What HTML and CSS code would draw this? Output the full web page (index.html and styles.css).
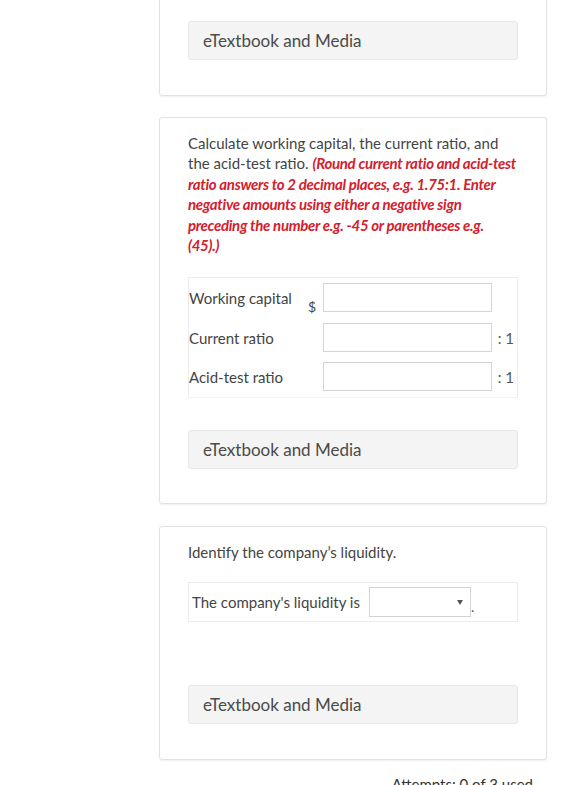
FILE: index.html
```html
<!DOCTYPE html>
<html>
<head>
<meta charset="utf-8">
<link rel="stylesheet" href="styles.css">
</head>
<body>
<div class="page">
  <div class="card card-first">
    <div class="media-btn">eTextbook and Media</div>
  </div>

  <div class="card card-calc">
    <p class="question">Calculate working capital, the current ratio, and the acid-test ratio. <em class="hint">(Round current ratio and acid-test ratio answers to 2 decimal places, e.g. 1.75:1. Enter negative amounts using either a negative sign preceding the number e.g. -45 or parentheses e.g.<br>(45).)</em></p>
    <div class="answer-grid">
      <div class="label">Working capital</div>
      <div class="prefix">$</div>
      <div class="field"><span class="input"></span></div>
      <div class="suffix"></div>

      <div class="label">Current ratio</div>
      <div class="prefix"></div>
      <div class="field"><span class="input"></span></div>
      <div class="suffix">: 1</div>

      <div class="label">Acid-test ratio</div>
      <div class="prefix"></div>
      <div class="field"><span class="input"></span></div>
      <div class="suffix">: 1</div>
    </div>
    <div class="media-btn media-btn-calc">eTextbook and Media</div>
  </div>

  <div class="card card-liq">
    <p class="question">Identify the company’s liquidity.</p>
    <div class="liq-box">
      <span class="liq-label">The company's liquidity is</span>
      <span class="select"><span class="arrow"></span></span><span class="dot">.</span>
    </div>
    <div class="media-btn media-btn-liq">eTextbook and Media</div>
  </div>

  <div class="attempts">Attempts: 0 of 3 used</div>
</div>
</body>
</html>
```

FILE: styles.css
```css
html, body {
  margin: 0;
  padding: 0;
  background: #ffffff;
}

body {
  font-family: Lato, "Open Sans", "Liberation Sans", sans-serif;
  color: #454545;
  overflow: hidden;
}

.page {
  width: 388px;
  margin-left: 159px;
}

.card {
  border: 1px solid #e2e2e2;
  border-radius: 3px;
  box-shadow: 0 1px 2px rgba(0, 0, 0, 0.06);
  padding: 0 28px;
  background: #fff;
}

.card-first {
  margin-top: -20px;
  padding-top: 40px;
  padding-bottom: 35px;
}

.card-calc {
  margin-top: 21px;
  padding-top: 15px;
  padding-bottom: 34px;
}

.card-liq {
  margin-top: 22px;
  padding-top: 15px;
  padding-bottom: 35px;
}

.media-btn {
  height: 37px;
  line-height: 37px;
  background: #f4f4f4;
  border: 1px solid #e7e7e7;
  border-radius: 3px;
  padding: 0 14px;
  font-size: 17px;
  color: #4a4a4a;
}

.question {
  margin: 0;
  font-size: 15px;
  line-height: 20.4px;
  color: #444;
}

.hint {
  color: #d3202c;
  font-weight: bold;
  font-style: italic;
  letter-spacing: -0.3px;
}

.answer-grid {
  margin-top: 22px;
  display: grid;
  grid-template-columns: 112px 22px 169px 1fr;
  grid-auto-rows: 39.4px;
  border: 1px solid #ececec;
  border-bottom-color: #f3f3f3;
}

.label {
  display: flex;
  align-items: center;
  font-size: 15px;
  color: #444;
  white-space: nowrap;
}

.prefix {
  display: flex;
  align-items: flex-end;
  justify-content: center;
  font-size: 14px;
  padding-bottom: 3px;
  color: #444;
}

.field {
  display: flex;
  align-items: flex-start;
  padding-top: 5px;
}

.input {
  display: block;
  width: 167px;
  height: 27px;
  border: 1px solid #d3d3d3;
  background: #fff;
}

.suffix {
  display: flex;
  align-items: center;
  justify-content: flex-end;
  font-size: 15px;
  color: #555;
  padding-right: 3px;
  white-space: nowrap;
}

.media-btn-calc {
  margin-top: 32px;
}

.liq-box {
  margin-top: 20px;
  height: 38px;
  border: 1px solid #ececec;
  display: flex;
  align-items: center;
  padding-left: 3px;
}

.liq-label {
  font-size: 15px;
  color: #444;
  margin-right: 9px;
}

.select {
  display: block;
  position: relative;
  width: 100px;
  height: 28px;
  border: 1px solid #d3d3d3;
  background: #fff;
}

.arrow {
  position: absolute;
  right: 7px;
  top: 12px;
  width: 0;
  height: 0;
  border-left: 3px solid transparent;
  border-right: 3px solid transparent;
  border-top: 5px solid #555;
}

.dot {
  font-size: 14px;
  color: #555;
  align-self: center;
  margin-top: 8px;
}

.media-btn-liq {
  margin-top: 63px;
}

.attempts {
  margin-top: 15px;
  text-align: right;
  padding-right: 14px;
  font-size: 15px;
  color: #333;
}
```
